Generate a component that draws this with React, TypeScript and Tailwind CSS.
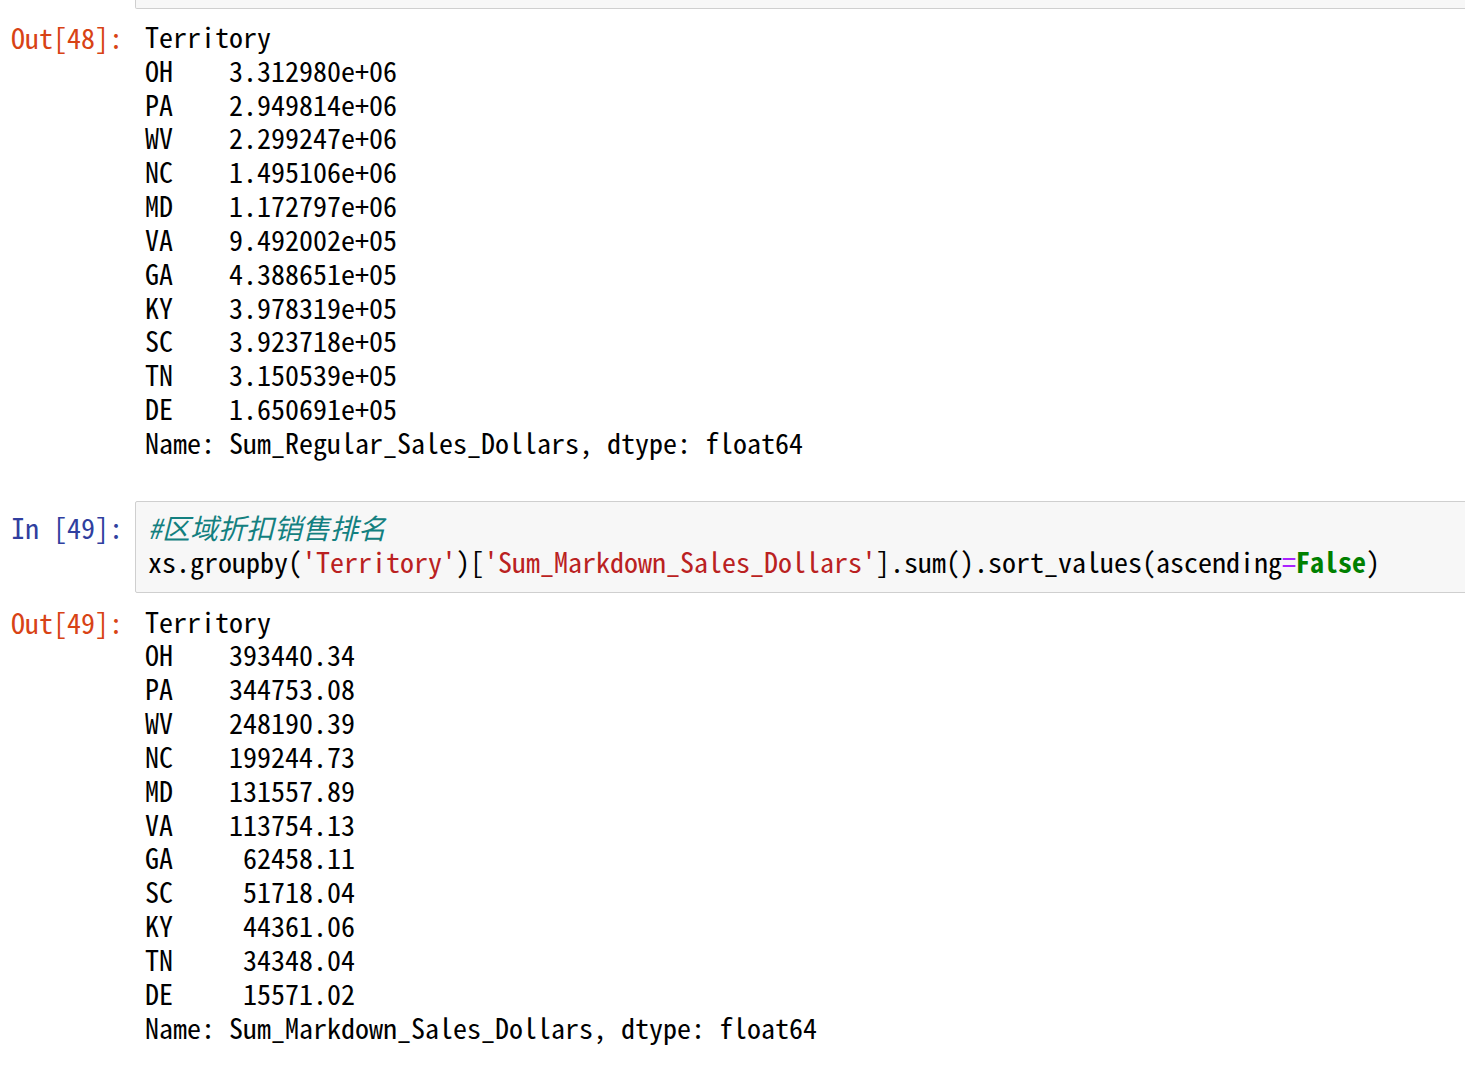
import React from 'react'

const mono = "font-['Noto_Sans_Mono_CJK_SC','Liberation_Mono','Noto_Sans_CJK_SC',monospace]"

const regular = [
  ['OH', '3.312980e+06'],
  ['PA', '2.949814e+06'],
  ['WV', '2.299247e+06'],
  ['NC', '1.495106e+06'],
  ['MD', '1.172797e+06'],
  ['VA', '9.492002e+05'],
  ['GA', '4.388651e+05'],
  ['KY', '3.978319e+05'],
  ['SC', '3.923718e+05'],
  ['TN', '3.150539e+05'],
  ['DE', '1.650691e+05'],
]

const markdown = [
  ['OH', '393440.34'],
  ['PA', '344753.08'],
  ['WV', '248190.39'],
  ['NC', '199244.73'],
  ['MD', '131557.89'],
  ['VA', '113754.13'],
  ['GA', ' 62458.11'],
  ['SC', ' 51718.04'],
  ['KY', ' 44361.06'],
  ['TN', ' 34348.04'],
  ['DE', ' 15571.02'],
]

function Prompt({ label, kind }: { label: string; kind: 'in' | 'out' }) {
  return (
    <div
      className={`w-[135px] shrink-0 pr-[12px] text-right whitespace-pre leading-[34px] ${
        kind === 'in' ? 'text-[#303f9f]' : 'text-[#d84315]'
      }`}
    >
      {label}
    </div>
  )
}

function Series({ rows, name }: { rows: string[][]; name: string }) {
  return (
    <div className="pl-[10px] leading-[33.83px] text-black whitespace-pre">
      <div>Territory</div>
      {rows.map(([k, v]) => (
        <div key={k}>{`${k}    ${v}`}</div>
      ))}
      <div>{`Name: ${name}, dtype: float64`}</div>
    </div>
  )
}

export default function App() {
  return (
    <div className={`${mono} text-[28px] w-[1465px] h-[1072px] overflow-hidden bg-white text-black`}>
      {/* tail of the previous input cell */}
      <div className="ml-[135px] w-[1400px] h-[9px] bg-[#f7f7f7] border border-t-0 border-[#cfcfcf] rounded-b-[2px]" />

      {/* Out[48] */}
      <div className="flex mt-[11px]">
        <Prompt label="Out[48]:" kind="out" />
        <Series rows={regular} name="Sum_Regular_Sales_Dollars" />
      </div>

      {/* In [49] */}
      <div className="flex mt-[41px]">
        <div className="pt-[9px] shrink-0">
          <Prompt label="In [49]:" kind="in" />
        </div>
        <div className="w-[1400px] shrink-0 bg-[#f7f7f7] border border-[#cfcfcf] rounded-[2px] pt-[8px] pb-[13px] pl-[12px]">
          <div className="h-[35px] leading-[35px] italic text-[#138080] whitespace-pre">#区域折扣销售排名</div>
          <div className="leading-[33.83px] whitespace-pre">
            <span>xs.groupby(</span>
            <span className="text-[#ba2121]">'Territory'</span>
            <span>)[</span>
            <span className="text-[#ba2121]">'Sum_Markdown_Sales_Dollars'</span>
            <span>].sum().sort_values(ascending</span>
            <span className="text-[#aa22ff]">=</span>
            <span className="text-[#008000] font-bold">False</span>
            <span>)</span>
          </div>
        </div>
      </div>

      {/* Out[49] */}
      <div className="flex mt-[12px]">
        <Prompt label="Out[49]:" kind="out" />
        <Series rows={markdown} name="Sum_Markdown_Sales_Dollars" />
      </div>
    </div>
  )
}
